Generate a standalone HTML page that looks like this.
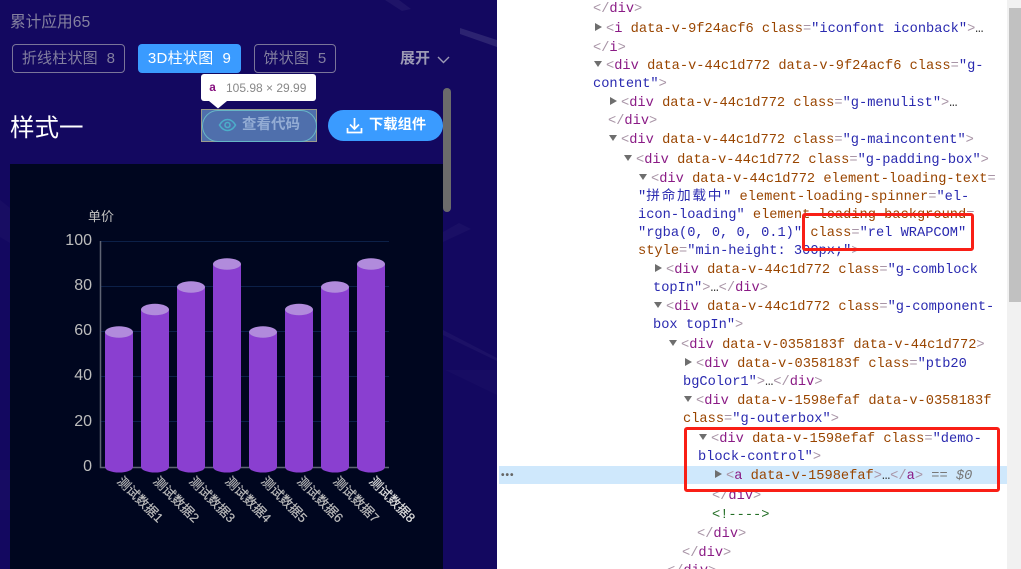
<!DOCTYPE html>
<html><head><meta charset="utf-8"><style>
html,body{margin:0;padding:0;width:1021px;height:569px;overflow:hidden;background:#fff}
body{position:relative;font-family:"Liberation Sans","Noto Sans CJK SC",sans-serif}
.a{position:absolute;white-space:nowrap}
#left{position:absolute;left:0;top:0;width:497px;height:569px;background:#130860;overflow:hidden}
.tag{position:absolute;top:44px;height:27px;line-height:27px;border:1px solid #7a7599;border-radius:4px;color:#837f9f;font-size:15px;text-align:center;box-sizing:content-box;letter-spacing:.3px}
.l{position:absolute;white-space:pre;font:13.68px/18px "Liberation Mono","Noto Sans CJK SC",monospace;color:#a894a6;height:18px;margin-top:2px}
.n{color:#8a1a85}.t{color:#994500}.v{color:#2a2ab0}.g{color:#777}.e{color:#333}
.r,.d{position:absolute;width:0;height:0}
.r{border-left:7px solid #6e6e6e;border-top:4px solid transparent;border-bottom:4px solid transparent}
.d{border-top:6px solid #6e6e6e;border-left:4px solid transparent;border-right:4px solid transparent}
</style></head><body>
<div id="left">
<svg class="a" style="left:0;top:0" width="497" height="569">
<g fill="#fff"><path d="M385 0h14l12 9-9 2z" opacity=".05"/><path d="M460 28l37 12v7l-37-13z" opacity=".11"/><path d="M443 232l16-9 12 6-28 13z" opacity=".03"/><path d="M443 330l54 28v3l-54-26z" opacity=".04"/><path d="M445 370h52v25z" opacity=".02"/><path d="M0 200l10 8v35l-10-6z" opacity=".025"/><path d="M0 470h10v40H0z" opacity=".02"/></g></svg>
<div class="a" style="left:10px;top:13px;font-size:15.7px;line-height:20px;color:#85819f">累计应用65</div>
<div class="tag" style="left:12px;width:111px;letter-spacing:.2px">折线柱状图&nbsp; 8</div>
<div class="tag" style="left:138px;width:103px;height:29px;line-height:29px;border:0;background:#3a9bff;color:#fff">3D柱状图&nbsp; 9</div>
<div class="tag" style="left:254px;width:80px;letter-spacing:.2px">饼状图&nbsp; 5</div>
<div class="a" style="left:400px;top:49px;font-size:15px;line-height:20px;font-weight:bold;color:#9d9ab5">展开</div>
<svg class="a" style="left:436px;top:54px" width="15" height="12"><path d="M2 3l5.500 5.500L13 3" fill="none" stroke="#9d9ab5" stroke-width="1.400"/></svg>
<div class="a" style="left:10px;top:112px;font-size:24.5px;line-height:34px;color:#fff">样式一</div>
<div class="a" style="left:201px;top:109px;width:116px;height:33px;background:#4f6fac;box-shadow:inset 0 0 0 1px #9a9c8c"></div>
<div class="a" style="left:202px;top:110px;width:113px;height:30px;border:1px solid #66b5c6;border-radius:16px"></div>
<svg class="a" style="left:218px;top:117px" width="19" height="16" fill="none" stroke="#4cadc9" stroke-width="1.600"><path d="M1.500 8C4 3.800 6.500 2.500 9.500 2.500s5.500 1.300 8 5.500c-2.500 4.200-5 5.500-8 5.500S4 12.200 1.500 8z"/><circle cx="9.500" cy="8" r="2.500"/></svg>
<div class="a" style="left:242px;top:115px;font-size:14.500px;line-height:20px;color:#93acd4;font-weight:bold">查看代码</div>
<div class="a" style="left:328px;top:110px;width:115px;height:31px;border-radius:16px;background:#3a9bff"></div>
<svg class="a" style="left:346px;top:117px" width="17" height="17" fill="none" stroke="#fff" stroke-width="1.700"><path d="M8.500 1v10.500M4 7.500l4.500 4.500L13 7.500M1.500 11v4.500h14V11"/></svg>
<div class="a" style="left:369px;top:115px;font-size:14.300px;line-height:20px;color:#fff;font-weight:bold">下载组件</div>
<div class="a" style="left:201px;top:74px;width:115px;height:27px;background:#fff;border-radius:3px"></div>
<svg class="a" style="left:209px;top:100px" width="18" height="9"><path d="M0 1h18L9 8.500z" fill="#fff"/></svg>
<div class="a" style="left:209px;top:80px;font:bold 12px/16px 'Liberation Mono',monospace;color:#881280">a</div>
<div class="a" style="left:226px;top:80px;font-size:12px;line-height:16px;color:#888">105.98 × 29.99</div>
<div class="a" style="left:10px;top:164px;width:433px;height:405px;background:#00061f"></div>
<div class="a" style="left:443px;top:88px;width:8px;height:124px;border-radius:4px;background:#6b6b6b"></div>
<svg class="a" style="left:0;top:0" width="497" height="569" font-family="'Liberation Sans','Noto Sans CJK SC',sans-serif">
<g stroke="#0c2048" stroke-width="1"><path d="M101 241.500H389M101 286.500H389M101 331.500H389M101 376.500H389M101 421.500H389"/></g>
<path d="M100.500 241V467.500H389" fill="none" stroke="#5f6474" stroke-width="1.500"/>
<g fill="#bdbdbd" font-size="16" text-anchor="end"><text x="92" y="245">100</text><text x="92" y="290">80</text><text x="92" y="335">60</text><text x="92" y="380">40</text><text x="92" y="426">20</text><text x="92" y="471">0</text></g>
<text x="101" y="221" fill="#c0c0c0" font-size="13" text-anchor="middle">单价</text>
<g fill="#8a3fd0">
<path d="M105 332h28V467a14 5.500 0 0 1-28 0z"/><path d="M141 309.500h28V467a14 5.500 0 0 1-28 0z"/><path d="M177 287h28V467a14 5.500 0 0 1-28 0z"/><path d="M213 264h28V467a14 5.500 0 0 1-28 0z"/><path d="M249 332h28V467a14 5.500 0 0 1-28 0z"/><path d="M285 309.500h28V467a14 5.500 0 0 1-28 0z"/><path d="M321 287h28V467a14 5.500 0 0 1-28 0z"/><path d="M357 264h28V467a14 5.500 0 0 1-28 0z"/></g>
<g fill="#b18bdc">
<ellipse cx="119" cy="332" rx="14" ry="5.700"/><ellipse cx="155" cy="309.500" rx="14" ry="5.700"/><ellipse cx="191" cy="287" rx="14" ry="5.700"/><ellipse cx="227" cy="264" rx="14" ry="5.700"/><ellipse cx="263" cy="332" rx="14" ry="5.700"/><ellipse cx="299" cy="309.500" rx="14" ry="5.700"/><ellipse cx="335" cy="287" rx="14" ry="5.700"/><ellipse cx="371" cy="264" rx="14" ry="5.700"/></g>
<g fill="#bdbdbd" font-size="12.800" stroke="#bdbdbd" stroke-width=".2">
<text transform="translate(116.500 482) rotate(45)">测试数据1</text><text transform="translate(152.500 482) rotate(45)">测试数据2</text><text transform="translate(188.500 482) rotate(45)">测试数据3</text><text transform="translate(224.500 482) rotate(45)">测试数据4</text><text transform="translate(260.500 482) rotate(45)">测试数据5</text><text transform="translate(296.500 482) rotate(45)">测试数据6</text><text transform="translate(332.500 482) rotate(45)">测试数据7</text><text transform="translate(368.500 482) rotate(45)" fill="#e0e0e0" stroke="#e0e0e0">测试数据8</text></g>
</svg>
</div>

<div class="a" style="left:499px;top:466px;width:508px;height:18px;background:#cfe8fc"></div>
<div class="a" style="left:501px;top:469px;font:bold 10px/14px 'Liberation Sans',sans-serif;color:#666;letter-spacing:1px">•••</div>
<div class="a" style="left:1007px;top:0;width:14px;height:569px;background:#f1f1f1"></div>
<div class="a" style="left:1009px;top:8px;width:12px;height:294px;background:#c1c1c1"></div>

<div class="l" style="left:593px;top:-1px">&lt;/<span class="n">div</span>&gt;</div>
<div class="r" style="left:595px;top:23px"></div>
<div class="l" style="left:606px;top:19px">&lt;<span class="n">i</span> <span class="t">data-v-9f24acf6 class</span>=<span class="v">"iconfont iconback"</span>&gt;<span class="e">…</span></div>
<div class="l" style="left:593px;top:38px">&lt;/<span class="n">i</span>&gt;</div>
<div class="d" style="left:594px;top:61px"></div>
<div class="l" style="left:606px;top:56px">&lt;<span class="n">div</span> <span class="t">data-v-44c1d772 data-v-9f24acf6 class</span>=<span class="v">"g-</span></div>
<div class="l" style="left:593px;top:74px"><span class="v">content"</span>&gt;</div>
<div class="r" style="left:610px;top:97px"></div>
<div class="l" style="left:621px;top:93px">&lt;<span class="n">div</span> <span class="t">data-v-44c1d772 class</span>=<span class="v">"g-menulist"</span>&gt;<span class="e">…</span></div>
<div class="l" style="left:608px;top:111px">&lt;/<span class="n">div</span>&gt;</div>
<div class="d" style="left:609px;top:135px"></div>
<div class="l" style="left:621px;top:130px">&lt;<span class="n">div</span> <span class="t">data-v-44c1d772 class</span>=<span class="v">"g-maincontent"</span>&gt;</div>
<div class="d" style="left:624px;top:155px"></div>
<div class="l" style="left:636px;top:150px">&lt;<span class="n">div</span> <span class="t">data-v-44c1d772 class</span>=<span class="v">"g-padding-box"</span>&gt;</div>
<div class="d" style="left:639px;top:174px"></div>
<div class="l" style="left:651px;top:169px">&lt;<span class="n">div</span> <span class="t">data-v-44c1d772 element-loading-text</span>=</div>
<div class="l" style="left:638px;top:187px"><span class="v">"<span style="letter-spacing:1.700px">拼命加载中</span>"</span> <span class="t">element-loading-spinner</span>=<span class="v">"el-</span></div>
<div class="l" style="left:638px;top:205px"><span class="v">icon-loading"</span> <span class="t">element-loading-background</span>=</div>
<div class="l" style="left:638px;top:223px"><span class="v">"rgba(0, 0, 0, 0.1)"</span> <span class="t">class</span>=<span class="v">"rel WRAPCOM"</span></div>
<div class="l" style="left:638px;top:241px"><span class="t">style</span>=<span class="v">"min-height: 300px;"</span>&gt;</div>
<div class="r" style="left:655px;top:264px"></div>
<div class="l" style="left:666px;top:260px">&lt;<span class="n">div</span> <span class="t">data-v-44c1d772 class</span>=<span class="v">"g-comblock</span></div>
<div class="l" style="left:653px;top:278px"><span class="v">topIn"</span>&gt;<span class="e">…</span>&lt;/<span class="n">div</span>&gt;</div>
<div class="d" style="left:654px;top:302px"></div>
<div class="l" style="left:666px;top:297px">&lt;<span class="n">div</span> <span class="t">data-v-44c1d772 class</span>=<span class="v">"g-component-</span></div>
<div class="l" style="left:653px;top:315px"><span class="v">box topIn"</span>&gt;</div>
<div class="d" style="left:669px;top:340px"></div>
<div class="l" style="left:681px;top:335px">&lt;<span class="n">div</span> <span class="t">data-v-0358183f data-v-44c1d772</span>&gt;</div>
<div class="r" style="left:685px;top:358px"></div>
<div class="l" style="left:696px;top:354px">&lt;<span class="n">div</span> <span class="t">data-v-0358183f class</span>=<span class="v">"ptb20</span></div>
<div class="l" style="left:683px;top:372px"><span class="v">bgColor1"</span>&gt;<span class="e">…</span>&lt;/<span class="n">div</span>&gt;</div>
<div class="d" style="left:684px;top:396px"></div>
<div class="l" style="left:696px;top:391px">&lt;<span class="n">div</span> <span class="t">data-v-1598efaf data-v-0358183f</span></div>
<div class="l" style="left:683px;top:409px"><span class="t">class</span>=<span class="v">"g-outerbox"</span>&gt;</div>
<div class="d" style="left:699px;top:434px"></div>
<div class="l" style="left:711px;top:429px">&lt;<span class="n">div</span> <span class="t">data-v-1598efaf class</span>=<span class="v">"demo-</span></div>
<div class="l" style="left:698px;top:447px"><span class="v">block-control"</span>&gt;</div>
<div class="r" style="left:715px;top:470px"></div>
<div class="l" style="left:726px;top:466px">&lt;<span class="n">a</span> <span class="t">data-v-1598efaf</span>&gt;<span class="e">…</span>&lt;/<span class="n">a</span>&gt; <span class="g">== <i>$0</i></span></div>
<div class="l" style="left:712px;top:486px">&lt;/<span class="n">div</span>&gt;</div>
<div class="l" style="left:712px;top:505px;color:#236e25">&lt;!----&gt;</div>
<div class="l" style="left:697px;top:524px">&lt;/<span class="n">div</span>&gt;</div>
<div class="l" style="left:682px;top:543px">&lt;/<span class="n">div</span>&gt;</div>
<div class="l" style="left:667px;top:561px">&lt;/<span class="n">div</span>&gt;</div>

<div class="a" style="left:802px;top:213px;width:172px;height:38px;box-sizing:border-box;border:3px solid #f91f16;border-radius:3px"></div>
<div class="a" style="left:684px;top:427px;width:316px;height:65px;box-sizing:border-box;border:3px solid #f91f16;border-radius:3px"></div>
</body></html>
